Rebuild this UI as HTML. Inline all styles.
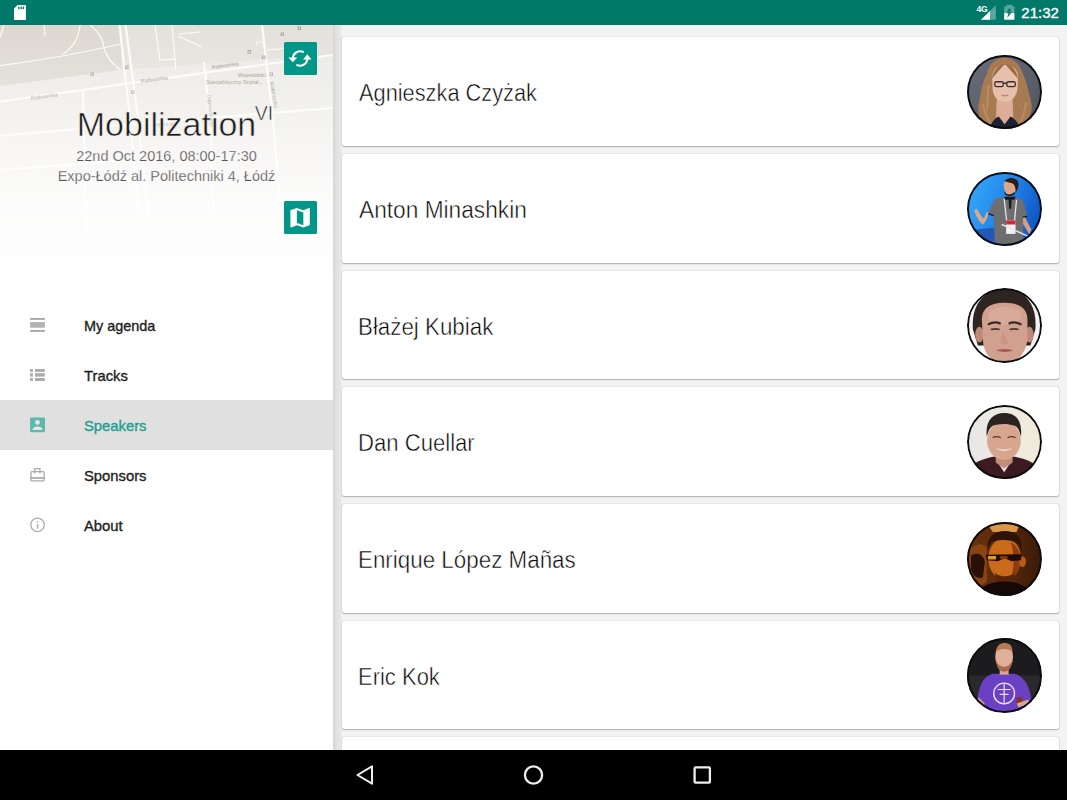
<!DOCTYPE html>
<html><head><meta charset="utf-8">
<style>
*{margin:0;padding:0;box-sizing:border-box}
html,body{width:1067px;height:800px;overflow:hidden;background:#f3f3f3;font-family:"Liberation Sans",sans-serif}
.abs{position:absolute}
#status{position:absolute;left:0;top:0;width:1067px;height:25px;background:#00796b}
#nav{position:absolute;left:0;top:750px;width:1067px;height:50px;background:#000}
.card{position:absolute;left:342px;width:717px;height:108.6px;margin-top:.4px;background:#fff;border-radius:2px;box-shadow:0 0 1px rgba(0,0,0,.4),0 1px 1.5px rgba(0,0,0,.26)}
.card .nm{position:absolute;left:17px;top:2px;line-height:109.5px;font-size:23px;color:#000;-webkit-text-stroke:0.5px #fff;white-space:nowrap;transform-origin:0 0}
.card .av2{position:absolute;left:625.3px;top:17.6px;width:74.3px;height:74.3px;border-radius:50%;overflow:hidden}
.card .av2 svg{display:block;width:100%;height:100%}
.card .av2:after{content:"";position:absolute;left:0;top:0;right:0;bottom:0;border-radius:50%;border:2px solid #0c0c0c}
#drawer{position:absolute;left:0;top:25px;width:333px;height:725px;background:#fff;overflow:hidden}
#shadow{position:absolute;left:333px;top:25px;width:9px;height:725px;background:linear-gradient(to right,rgba(0,0,0,.12),rgba(0,0,0,.08) 35%,rgba(0,0,0,.05) 85%,rgba(0,0,0,0))}
.btn{position:absolute;left:284px;width:33px;height:33px;background:#009688;border-radius:1.5px}
.item{position:absolute;left:0;width:333px;height:50px}
.item .t{position:absolute;left:84px;top:.7px;line-height:50px;font-size:14.8px;color:#1e1e1e;font-weight:400;-webkit-text-stroke:0.35px #1e1e1e;white-space:nowrap}
.item svg{position:absolute;left:28px;top:13px}
</style></head><body>
<div id="status"></div>

<div id="drawer">
<svg class="abs" style="left:0;top:0" width="333" height="249" viewBox="0 25 333 249">
<rect x="0" y="25" width="333" height="249" fill="#ebe9e4"/>
<polygon points="0,25 121,25 121,70 0,86" fill="#dcd8d0"/>
<polygon points="121,25 333,25 333,55 121,70" fill="#e4e1db"/>
<g stroke="#fafaf8" fill="none" stroke-width="1.2">
<path d="M0,65.6 Q60,58 121,44"/>
<path d="M80,25 Q78,45 63,54"/>
<path d="M90,25 Q103,35 104,48 Q108,62 121,70"/>
<path d="M0,37 L4,25"/><path d="M44,25 L45,36"/>
<path d="M155,25 L160,60 L175,59"/><path d="M172,25 L176,70"/><path d="M178,34 L200,32"/><path d="M178,36 L202,47"/>
<path d="M257,45 L257,42 L264,42"/><path d="M267,50 L300,47"/>
</g>
<g stroke="#fbfbf9" fill="none" stroke-width="2.2">
<path d="M119.5,25 L129,110 L140,230"/>
<path d="M125.5,25 L137,110 L150,230"/>
<path d="M0,101.6 L121,84.5 L333,55"/>
<path d="M0,136 L121,125 L333,108"/>
<path d="M204,62 L210,120 L215,240"/>
<path d="M262,25 L272,110 L280,200"/>
<path d="M83,91 L84,140 L86,240"/>
<path d="M0,170 L130,160"/>
</g>
<g font-family="Liberation Sans" font-size="5.2" fill="#8e8982">
<text transform="translate(31,100) rotate(-8)">Radwańska</text>
<text transform="translate(141,83) rotate(-8)">Radwańska</text>
<text transform="translate(212,69) rotate(-8)">Radwańska</text>
<text x="238" y="77">Wojewódzki</text>
<text x="206" y="84">Specjalistyczny Szpital...</text>
<text transform="translate(270,82) rotate(80)">Wałbrzyska</text>
<text transform="translate(207,95) rotate(84)">Dąbrowskiego</text>
<text x="153" y="126">Expo Łódź</text>
</g>
<g fill="none" stroke="#a09a92" stroke-width=".8">
<rect x="91" y="73" width="2.6" height="2.6"/><rect x="125.5" y="66" width="2.6" height="2.6"/><rect x="131.5" y="91" width="2.6" height="2.6"/>
<rect x="248" y="50.5" width="2.6" height="2.6"/><rect x="262.5" y="56" width="2.6" height="2.6"/><rect x="270" y="73" width="2.6" height="2.6"/>
<rect x="281" y="33" width="2.6" height="2.6"/><rect x="298" y="27" width="2.6" height="2.6"/>
</g>
</svg>
<div class="abs" style="left:0;top:0;width:333px;height:249px;background:linear-gradient(to bottom,rgba(255,255,255,0) 0px,rgba(255,255,255,.25) 60px,rgba(255,255,255,.6) 120px,rgba(255,255,255,.88) 180px,rgba(255,255,255,.96) 248px)"></div>
<div class="abs" style="left:0;top:79.5px;width:333px;text-align:center;font-size:34px;color:#1a1a1a;-webkit-text-stroke:0.6px #efeeea;white-space:nowrap"><span style="position:relative">Mobilization<span style="position:absolute;left:100%;top:-2.5px;margin-left:-1.5px;font-size:19.5px">VI</span></span></div>
<div class="abs" style="left:0;top:123px;width:333px;text-align:center;font-size:14.5px;color:#555;-webkit-text-stroke:0.25px #f4f4f2;white-space:nowrap">22nd Oct 2016, 08:00-17:30</div>
<div class="abs" style="left:0;top:143px;width:333px;text-align:center;font-size:14.5px;color:#555;-webkit-text-stroke:0.25px #f8f8f6;white-space:nowrap">Expo-Łódź al. Politechniki 4, Łódź</div>
<div class="btn" style="top:17px"></div>
<div class="btn" style="top:176px"></div>
<div class="item" style="top:275px"><div class="t" style="left:83.5px;transform:scaleX(.975);transform-origin:0 0">My agenda</div></div>
<div class="item" style="top:325px"><div class="t">Tracks</div></div>
<div class="item" style="top:375px;background:#e0e0e0"><div class="t" style="color:#1c9e90;-webkit-text-stroke-color:#1c9e90">Speakers</div></div>
<div class="item" style="top:425px"><div class="t">Sponsors</div></div>
<div class="item" style="top:475px"><div class="t">About</div></div>
</div>
<div id="shadow"></div>

<div class="card" style="top:37px"><div class="nm" style="transform:scaleX(0.947)">Agnieszka Czyżak</div><div class="av2"><svg viewBox="0 0 75 75"><defs><linearGradient id="g1" x1="0" y1="0" x2="1" y2="1"><stop offset="0" stop-color="#6a6e7a"/><stop offset="1" stop-color="#50545f"/></linearGradient></defs><rect width="75" height="75" fill="url(#g1)"/>
<path d="M37.7,2.5 C28,3 22,10 20,19 C16,27 14,35 13,44 C11,52 10,58 14,66 L24,72 L52,72 L62,64 C66,58 66,52 64,44 C62,36 60,26 56,18 C53,9 47,3 37.7,2.5 Z" fill="#a87a52"/>
<path d="M16,50 C18,58 20,64 24,70 M60,48 C58,56 57,62 54,68 M22,30 C20,40 22,48 20,56" stroke="#c49a70" stroke-width="2" fill="none" opacity=".6"/>
<path d="M30,44 L46,44 L47,72 L29,72 Z" fill="#dcae98"/>
<path d="M23,75 C24,68 28,64 32,62 L38,70 L44,62 C48,64 52,68 53,75 Z" fill="#1c2030"/>
<path d="M25.5,22 C26,14 31,10 38,10 C46,10 51,14 51.5,22 L51,34 C50,42 45,47 38.3,47 C31,47 26.5,42 25.8,34 Z" fill="#e6c0aa"/>
<path d="M25,24 C27,14 33,9 38,9 C34,14 30,18 25,24 Z M51.5,24 C50,14 44,9 38.5,9 C42,13 46,18 51.5,24 Z" fill="#9c6e48"/>
<g fill="none" stroke="#3a2e2e" stroke-width="1.3"><rect x="28" y="27" width="8.6" height="5" rx="1.8"/><rect x="40.2" y="27" width="8.6" height="5" rx="1.8"/><path d="M36.6,28.5 L40.2,28.5"/></g>
<path d="M35,40.5 Q38.3,41.8 41.6,40.5" stroke="#c87e80" stroke-width="1.4" fill="none"/>
</svg></div></div>
<div class="card" style="top:153.67px"><div class="nm" style="transform:scaleX(0.987)">Anton Minashkin</div><div class="av2"><svg viewBox="0 0 75 75"><defs><linearGradient id="g2" x1="0" y1="0.3" x2="1" y2="0.7"><stop offset="0" stop-color="#35a8fa"/><stop offset=".55" stop-color="#1f7fe6"/><stop offset="1" stop-color="#0f50c0"/></linearGradient></defs>
<rect width="75" height="75" fill="url(#g2)"/>
<path d="M9,58 L28,56 L29,70 L13,70 Z" fill="#2458b8"/>
<path d="M22,41 C20,48 18,52 16,53 C12,50 9,44 7,38.5 L10,37 C13,42 15,46 17,47 L20,40 Z" fill="#d8a888"/>
<path d="M57,43 L65,58 L63,63 L55,50 Z" fill="#d4a080"/>
<path d="M27.8,27.5 C32,26 36,25 38,25.5 L48,25.5 C52,26 55,28 57,29.7 L61,44.5 L56.5,45.5 L57,73 L28,73 L27,44 L21.5,42 Z" fill="#6e6e70"/>
<path d="M21.5,42 L27,44 M56.5,45.5 L61,44.5" stroke="#1a1a1a" stroke-width="1.2"/>
<path d="M37.5,25 L49,25 L48,28 L45,28 L44.5,37 L42.5,37 L42,28 L38.5,28 Z" fill="#1a1a1a"/>
<path d="M37.5,27 L40,49 M50,28 L48,49" stroke="#e8e8ea" stroke-width="1.3" fill="none"/>
<rect x="39.5" y="49" width="9.5" height="13.5" fill="#f2f0f0"/><rect x="39.5" y="49" width="9.5" height="4" fill="#d42838"/>
<path d="M35,53 L62,65" stroke="#e0e4ea" stroke-width="1.4"/>
<path d="M37,14 C37,9 40,8 44,8.5 C48,9.5 50,13 49.5,17 C49,21 47,23 43,23 C39.5,23 37.5,19 37,14 Z" fill="#d8a88c"/>
<path d="M37.5,19 C39,23.5 44,24 48,20 L48.5,22 C46,25 40,25.5 38,22 Z" fill="#2a1e1a"/>
<path d="M38,9 C41,5 48,5 51,8.5 C53,12 52,17 49,21 C49.5,16 48,12 45,11 C43,10.5 40,10.5 38,9 Z" fill="#2a1e1a"/>
</svg></div></div>
<div class="card" style="top:270.33px"><div class="nm" style="left:15.6px;transform:scaleX(0.971)">Błażej Kubiak</div><div class="av2"><svg viewBox="0 0 75 75"><rect width="75" height="75" fill="#f4f2f4"/>
<path d="M6,42 C4,18 16,2 37,1 C60,1 71,18 69,42 L64,58 L11,58 Z" fill="#2e2420"/>
<ellipse cx="12.5" cy="47" rx="4.2" ry="8" fill="#c08878"/><ellipse cx="63" cy="47" rx="4.2" ry="8" fill="#c08878"/>
<path d="M15,32 C15,20 24,15 38,15 C52,15 61,20 61,32 L61,52 C59,68 49,76 38,76 C26,76 17,68 16,52 Z" fill="#d2a08e"/>
<ellipse cx="38" cy="28" rx="17" ry="9" fill="#dcb0a0" opacity=".6"/>
<path d="M21,37 Q28,33 34,36 M42,36 Q48,33 55,37" stroke="#3a2a24" stroke-width="2.2" fill="none"/>
<path d="M24,42 Q29,40.5 33,42 M43,42 Q48,40.5 52,42" stroke="#4a3630" stroke-width="1.6" fill="none"/>
<path d="M36,44 L34,56 Q38,58 42,56 Z" fill="#c48e7c" opacity=".7"/>
<path d="M29,63 Q38,60 47,63 Q38,66 29,63 Z" fill="#a85858"/>
</svg></div></div>
<div class="card" style="top:387px"><div class="nm" style="left:15.6px;transform:scaleX(0.961)">Dan Cuellar</div><div class="av2"><svg viewBox="0 0 75 75"><defs><linearGradient id="g4" x1="0" y1="0" x2="1" y2="0"><stop offset="0" stop-color="#e6e6e6"/><stop offset=".6" stop-color="#efebe0"/><stop offset="1" stop-color="#f0ead8"/></linearGradient></defs><rect width="75" height="75" fill="url(#g4)"/>
<path d="M0,66 C6,58 16,54 28,52 L47,52 C60,54 68,58 75,66 L75,75 L0,75 Z" fill="#3c1a22"/>
<path d="M31,58 L37.5,68 L44,58 Z" fill="#e8e4e4"/>
<path d="M29,48 L46,48 L46,58 L37.5,64 L29,58 Z" fill="#c08e78"/>
<ellipse cx="37.3" cy="36" rx="17" ry="19.5" fill="#d8a68e"/>
<path d="M20,32 C18,16 26,8 37.5,8 C49,8 56,15 54.5,32 C53,26 51,22 48,21 C40,18 32,19 26,21 C23,23 21,27 20,32 Z" fill="#2a2320"/>
<path d="M28,43 Q37.5,50 47,43 Q37.5,47 28,43 Z" fill="#f0e8e0"/>
<path d="M26,33 Q30,31 34,33 M41,33 Q45,31 49,33" stroke="#5a3a30" stroke-width="1.3" fill="none"/>
</svg></div></div>
<div class="card" style="top:503.67px"><div class="nm" style="left:15.6px;transform:scaleX(0.973)">Enrique López Mañas</div><div class="av2"><svg viewBox="0 0 75 75"><defs><linearGradient id="g5" x1="0" y1="0" x2="1" y2="0"><stop offset="0" stop-color="#6a3010"/><stop offset=".5" stop-color="#5a2a0c"/><stop offset="1" stop-color="#3a1a08"/></linearGradient></defs>
<rect width="75" height="75" fill="url(#g5)"/>
<path d="M2,28 C8,22 16,20 20,26 L20,60 C14,66 8,66 2,60 Z" fill="#8a4414"/>
<path d="M4,34 C10,30 16,32 18,40 L16,56 C10,58 6,54 4,48 Z" fill="#2a1006"/>
<path d="M22,4 C30,1 44,1 52,5 L50,10 L26,10 Z" fill="#d89848"/>
<ellipse cx="38" cy="37" rx="16.5" ry="21" fill="#cc6a1c"/>
<path d="M44,20 C50,24 54,30 54,38 C54,48 50,54 44,58 C48,48 48,30 44,20 Z" fill="#8a3e0e"/>
<ellipse cx="56" cy="40" rx="3.5" ry="5.5" fill="#b85a18"/>
<path d="M21,28 C20,14 28,9 38,9 C50,9 56,15 55,30 L52,22 C44,17 30,17 24,21 Z" fill="#2e1406"/>
<path d="M19,33 L55,32.5 L54.5,38.5 L45,39.5 L38,36.5 L31,39.5 L20,38.5 Z" fill="#1e0c04"/>
<rect x="21" y="34.3" width="8.5" height="3.6" rx="1" fill="#d89a28"/>
<rect x="33" y="34.3" width="8" height="3" rx="1" fill="#7a3a10"/>
<path d="M28,51 C32,56 44,56 48,51 L46,59 C42,63 34,63 30,59 Z" fill="#5a240a"/>
<path d="M8,75 C14,64 24,60 38,60 C52,60 60,64 66,75 Z" fill="#160804"/>
</svg></div></div>
<div class="card" style="top:620.33px"><div class="nm" style="left:15.6px;transform:scaleX(0.956)">Eric Kok</div><div class="av2"><svg viewBox="0 0 75 75"><rect width="75" height="75" fill="#1c1c1e"/>
<rect x="0" y="38" width="75" height="24" fill="#2a2a2c"/>
<path d="M10,75 C10,58 12,40 26,36 L48,36 C62,40 66,58 66,75 Z" fill="#6a40c4"/>
<circle cx="37.5" cy="56" r="10.5" fill="none" stroke="#e8e0f4" stroke-width="1.4"/>
<path d="M31,52 L44,52 M33,57 L42,57 M37.5,46 L37.5,66" stroke="#e8e0f4" stroke-width="1.2"/>
<path d="M12,60 L18,66 L16,70 L9,64 Z" fill="#d0a090"/>
<rect x="50" y="60" width="6" height="8" fill="#8a3020"/>
<path d="M50,66 L62,62 L63,67 L52,70 Z" fill="#d8a890"/>
<rect x="33" y="28" width="9" height="9" fill="#d8a890"/>
<ellipse cx="37.5" cy="19" rx="9" ry="13" fill="#e0b09a"/>
<path d="M29,22 C30,32 34,34 37.5,34 C41,34 45,32 46,22 C44,28 40,29 37.5,29 C35,29 31,28 29,22 Z" fill="#a86a48"/>
<path d="M29,14 C30,7 34,5 38,5 C42,5 46,7 46,14 C42,10 34,10 29,14 Z" fill="#b87a50"/>
</svg></div></div>
<div class="card" style="top:737px"></div>

<div id="nav"></div>
<svg id="ov" class="abs" style="left:0;top:0" width="1067" height="800" viewBox="0 0 1067 800">
<!-- status bar -->
<path d="M14.06,8.6 L17.6,4.95 L25.9,4.95 L25.9,20 L14.06,20 Z" fill="#fff"/>
<g fill="#0b6e62"><rect x="18.1" y="6.6" width="1.3" height="2.6" rx=".5"/><rect x="20.4" y="6.6" width="1.4" height="2.6" rx=".5"/><rect x="22.7" y="6.6" width="1.4" height="2.6" rx=".5"/></g>
<polygon points="981,19.8 995.8,5.15 995.8,19.8" fill="rgba(255,255,255,.35)"/>
<polygon points="981,19.8 990,10.9 990,19.8" fill="#fff"/>
<text x="976.6" y="11.8" font-family="Liberation Sans" font-weight="700" font-size="8.6" fill="#fff" letter-spacing="-.3">4G</text>
<rect x="1006.6" y="4.9" width="5.8" height="1.6" fill="rgba(255,255,255,.35)"/>
<rect x="1004.2" y="6.5" width="10.2" height="6.4" fill="rgba(255,255,255,.35)"/>
<rect x="1004.2" y="12.9" width="10.2" height="6.8" fill="#fff"/>
<polygon points="1008,8.8 1011.4,8.8 1010.1,11.8 1012.2,11.8 1007.2,18 1008.4,13.2 1006.9,13.2" fill="#0a7a6c"/>
<text x="1021.3" y="18.3" font-family="Liberation Sans" font-size="15" fill="#fff" stroke="#fff" stroke-width=".35">21:32</text>
<!-- sync icon -->
<g transform="translate(284,42)" fill="none" stroke="#fff" stroke-width="2.1">
<path d="M19.7,10.3 A7.2,7.2 0 0 0 8.9,16.3"/>
<path d="M12.5,22.7 A7.2,7.2 0 0 0 23.3,16.7"/>
</g>
<g transform="translate(284,42)" fill="#fff">
<polygon points="4.4,15.6 13.2,15.6 8.8,20.2"/>
<polygon points="19.1,17.4 27.5,17.4 23.3,12.2"/>
</g>
<!-- map icon -->
<g transform="translate(287.17,204.77) scale(1.078)" fill="#fff">
<path fill-rule="evenodd" d="M20.5 3l-.16.03L15 5.1 9 3 3.36 4.9c-.21.07-.36.25-.36.48V20.5c0 .28.22.5.5.5l.16-.03L9 18.9l6 2.1 5.64-1.9c.21-.07.36-.25.36-.48V3.5c0-.28-.22-.5-.5-.5zM15 19l-6-2.11V5l6 2.11V19z"/>
</g>
<!-- my agenda -->
<g fill="#a9a9a9">
<rect x="30.1" y="318" width="14.8" height="1.9"/>
<rect x="30.1" y="322.1" width="14.8" height="5.6" fill="#b3b3b3"/>
<rect x="30.1" y="330" width="14.8" height="1.9"/>
</g>
<!-- tracks -->
<g fill="#ababab">
<rect x="30.1" y="369" width="2.8" height="2.9"/><rect x="35" y="369" width="9.8" height="2.9"/>
<rect x="30.1" y="373.2" width="2.8" height="3.4"/><rect x="35" y="373.2" width="9.8" height="3.4"/>
<rect x="30.1" y="378" width="2.8" height="3"/><rect x="35" y="378" width="9.8" height="3"/>
</g>
<!-- speakers -->
<rect x="30.1" y="417.5" width="14.9" height="14.7" rx="1.3" fill="#5db8ae"/>
<circle cx="37.5" cy="422.4" r="2.45" fill="#e6e6e4"/>
<path d="M32.3,430 C32.8,427.3 35,426.4 37.6,426.4 C40.2,426.4 42.4,427.3 42.9,430 Z" fill="#e6e6e4"/>
<!-- sponsors -->
<g fill="none" stroke="#acacac" stroke-width="1.3">
<rect x="30.95" y="471.65" width="13.2" height="9.3" rx="1"/>
<path d="M34.85,473.6 V468.65 H39.95 V473.6"/>
</g>
<rect x="30.3" y="477.1" width="14.5" height="1.8" fill="#acacac"/>
<!-- about -->
<circle cx="37.55" cy="524.85" r="6.75" fill="none" stroke="#acacac" stroke-width="1.3"/>
<rect x="36.85" y="521.2" width="1.4" height="1.5" fill="#acacac"/>
<rect x="36.85" y="524.1" width="1.4" height="4.6" fill="#acacac"/>
<!-- nav bar -->
<polygon points="357.5,775 372,766.3 372,783.7" fill="none" stroke="#eee" stroke-width="2" stroke-linejoin="round"/>
<circle cx="533.5" cy="775" r="8.6" fill="none" stroke="#eee" stroke-width="2.3"/>
<rect x="694.6" y="767.4" width="15.3" height="15.3" rx="1" fill="none" stroke="#eee" stroke-width="2.3"/>
</svg>
</body></html>
